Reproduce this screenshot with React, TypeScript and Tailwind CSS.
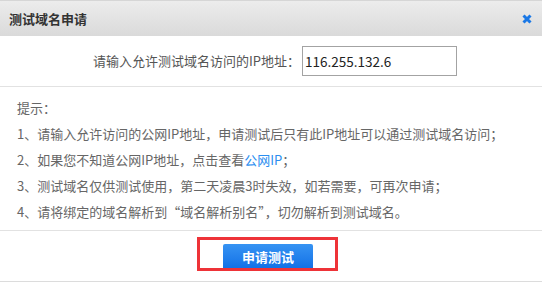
import React from "react";

export default function App() {
  const font = { fontFamily: '"Noto Sans CJK SC", "Noto Sans", sans-serif' };
  return (
    <div
      className="w-[542px] h-[284px] bg-white flex flex-col overflow-hidden"
      style={font}
    >
      <div className="h-[36px] shrink-0 flex items-center justify-between pl-[9px] pr-[10px] bg-gradient-to-b from-[#ececec] to-[#dadada] border-t border-[#d6d6d6]">
        <span className="text-[13px] font-bold text-[#333]">测试域名申请</span>
        <svg width="10" height="10" viewBox="0 0 10 10" className="mt-[1px]">
          <path d="M1.5 1.5 L8.5 8.5 M8.5 1.5 L1.5 8.5" stroke="#1a78e6" strokeWidth="3" strokeLinecap="butt" />
        </svg>
      </div>

      <div className="h-[51px] shrink-0 flex items-center pl-[93px] border-b border-[#e2e2e2]">
        <span className="text-[13px] text-[#555]">请输入允许测试域名访问的IP地址：</span>
        <div className="ml-[2px] w-[155px] h-[30px] border border-[#a3a3a3] flex items-center pl-[2px] text-[13.5px] text-[#222]">
          116.255.132.6
        </div>
      </div>

      <div className="shrink-0 pt-[8px] pb-[5px] pl-[17px] text-[13px] leading-[26px] text-[#666] border-b border-[#e2e2e2]">
        <div>提示：</div>
        <div>1、请输入允许访问的公网IP地址，申请测试后只有此IP地址可以通过测试域名访问；</div>
        <div>
          2、如果您不知道公网IP地址，点击查看<span className="text-[#2b8ef0]">公网IP</span>；
        </div>
        <div>3、测试域名仅供测试使用，第二天凌晨3时失效，如若需要，可再次申请；</div>
        <div>4、请将绑定的域名解析到“域名解析别名”，切勿解析到测试域名。</div>
      </div>

      <div className="h-[51px] shrink-0 pt-[6px] pl-[197px] border-b border-[#dcdcdc]">
        <div className="w-[141px] h-[34px] border-[3px] border-[#ee3338] overflow-hidden">
          <button className="mt-[4px] ml-[23px] w-[90px] h-[30px] rounded-[2px] bg-gradient-to-b from-[#3693f3] to-[#0569e3] text-white text-[13px] font-bold flex items-center justify-center pb-[4px]">
            申请测试
          </button>
        </div>
      </div>
    </div>
  );
}
